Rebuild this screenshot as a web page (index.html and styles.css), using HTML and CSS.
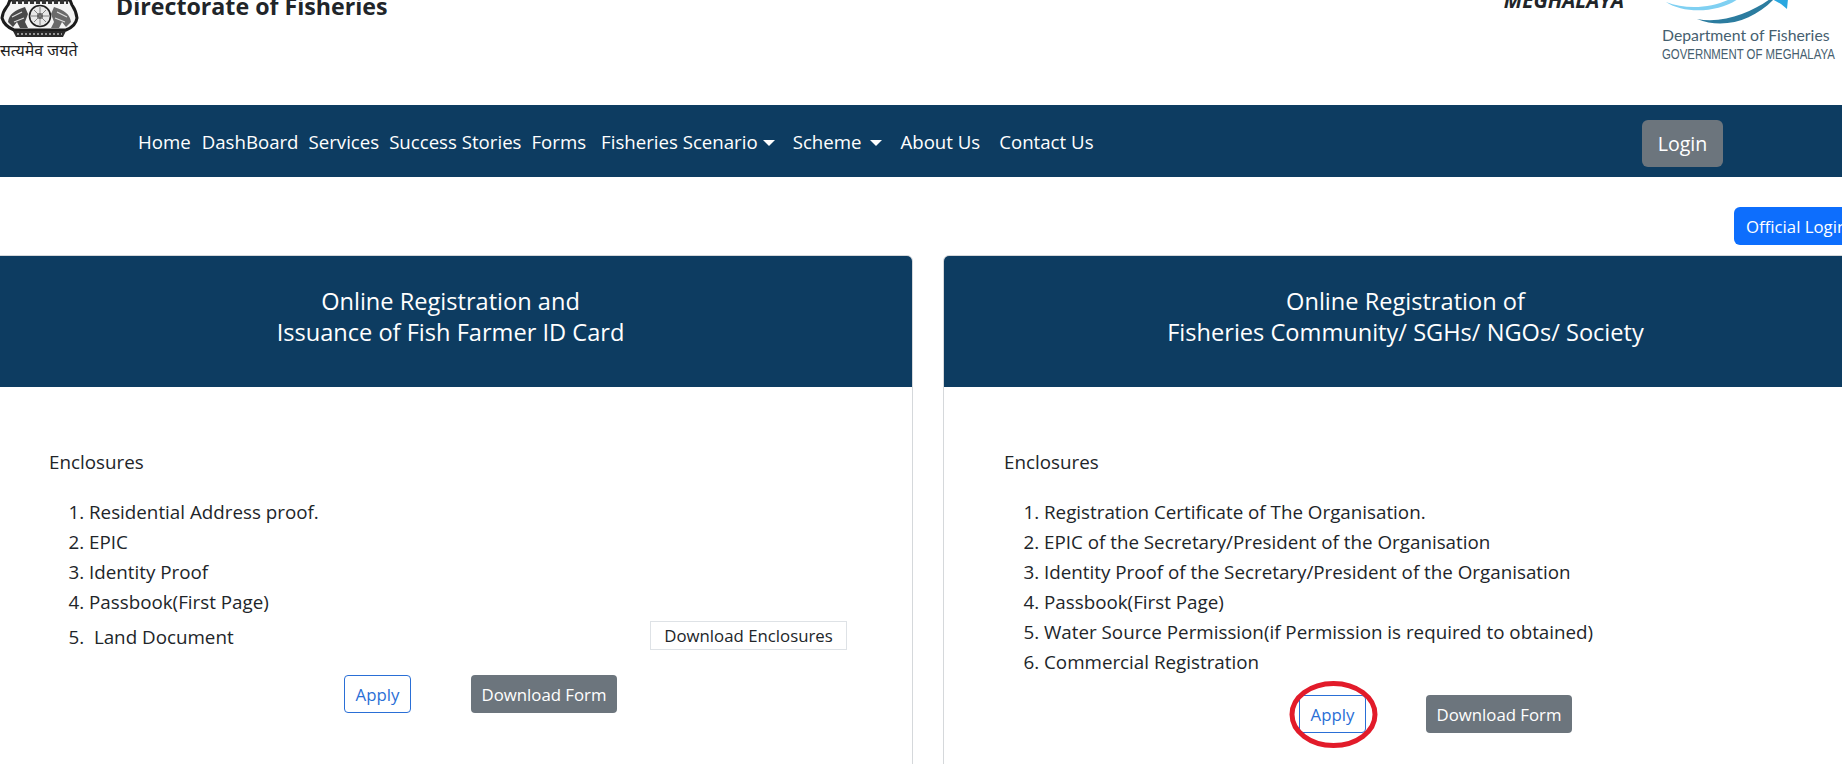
FILE: index.html
```html
<!DOCTYPE html>
<html lang="en">
<head>
<meta charset="utf-8">
<title>Directorate of Fisheries</title>
<link rel="stylesheet" href="styles.css">
</head>
<body>
<header class="top">
  <div class="emblem">
    <svg class="emblem-art" width="80" height="38" viewBox="0 0 80 38" aria-hidden="true">
      <path d="M2 18 C3 10 6 8 8 5 L10 0 L70 0 L72 5 C74 8 76 10 77 18 C76 25 71 28 66 30 L14 30 C9 28 4 25 2 18Z" fill="#f4f4f4" stroke="#1c1c1c" stroke-width="3"/>
      <path d="M13 31 L66 31 L63 37 L16 37Z" fill="#2a2a2a"/>
      <path d="M17 34H62" stroke="#bbb" stroke-width="1.5" stroke-dasharray="2 2"/>
      <circle cx="40" cy="16" r="10.5" fill="#e8e8e8" stroke="#1f1f1f" stroke-width="1.6"/>
      <circle cx="40" cy="16" r="3" fill="#555"/>
      <path d="M40 7V25M31 16H49M34 10L46 22M46 10L34 22" stroke="#777" stroke-width=".9"/>
      <path d="M8 22 C9 14 15 10 25 7 L28 14 L25 22 L28 28 L20 28 L17 22 L13 27Z" fill="#4a4a4a"/>
      <path d="M12 17 L22 12 M14 22 L24 18" stroke="#ddd" stroke-width="1.2"/>
      <path d="M71 22 C70 14 64 10 54 7 L51 14 L54 22 L51 28 L59 28 L62 22 L66 27Z" fill="#6a6a6a"/>
      <path d="M67 17 L57 12 M65 22 L55 18" stroke="#ddd" stroke-width="1.2"/>
      <path d="M12 2H68" stroke="#333" stroke-width="4" stroke-dasharray="4 2"/>
    </svg>
    <span class="motto">सत्यमेव जयते</span>
  </div>
  <h1 class="title">Directorate of Fisheries</h1>
  <div class="top-right">
    <span class="state">MEGHALAYA</span>
    <div class="dept">
      <svg class="dept-art" width="175" height="27" viewBox="0 0 175 27" aria-hidden="true">
        <path d="M4 2 C24 10 50 8 68 -1 L76 -1 C56 13 22 14 4 2Z" fill="#7fd0f2"/>
        <path d="M35 19 C62 24 90 12 108 -1 L112 -1 C92 20 62 30 35 19Z" fill="#2c7c9f"/>
        <path d="M110 -1 L126 -1 L125 9 L119 4Z" fill="#2aa7e0"/>
      </svg>
      <span class="dept-name">Department of Fisheries</span>
      <span class="dept-gov">GOVERNMENT OF MEGHALAYA</span>
    </div>
  </div>
</header>

<nav class="nav">
  <a class="nav-link home" href="#">Home</a>
  <a class="nav-link dash" href="#">DashBoard</a>
  <a class="nav-link serv" href="#">Services</a>
  <a class="nav-link succ" href="#">Success Stories</a>
  <a class="nav-link form" href="#">Forms</a>
  <a class="nav-link fish" href="#">Fisheries Scenario<span class="caret"></span></a>
  <a class="nav-link sche" href="#">Scheme<span class="caret wide"></span></a>
  <a class="nav-link abou" href="#">About Us</a>
  <a class="nav-link cont" href="#">Contact Us</a>
  <a class="login" href="#">Login</a>
</nav>

<div class="official-row"><a class="official" href="#">Official Login</a></div>

<main class="cards">
  <section class="card">
    <div class="card-head">Online Registration and<br>Issuance of Fish Farmer ID Card</div>
    <div class="card-body">
      <p class="encl">Enclosures</p>
      <ol class="docs">
        <li>Residential Address proof.</li>
        <li>EPIC</li>
        <li>Identity Proof</li>
        <li>Passbook(First Page)</li>
        <li class="docs-last"><span>&nbsp;Land Document</span><a class="dl-encl" href="#">Download Enclosures</a></li>
      </ol>
      <div class="actions">
        <a class="btn apply" href="#">Apply</a>
        <a class="btn grey" href="#">Download Form</a>
      </div>
    </div>
  </section>
  <section class="card">
    <div class="card-head">Online Registration of<br>Fisheries Community/ SGHs/ NGOs/ Society</div>
    <div class="card-body">
      <p class="encl">Enclosures</p>
      <ol class="docs">
        <li>Registration Certificate of The Organisation.</li>
        <li>EPIC of the Secretary/President of the Organisation</li>
        <li>Identity Proof of the Secretary/President of the Organisation</li>
        <li>Passbook(First Page)</li>
        <li>Water Source Permission(if Permission is required to obtained)</li>
        <li>Commercial Registration</li>
      </ol>
      <div class="actions">
        <a class="btn apply marked" href="#">Apply
          <svg class="ring" width="90" height="70" viewBox="0 0 90 70" aria-hidden="true"><ellipse cx="45.5" cy="34.5" rx="41.5" ry="31" fill="none" stroke="#e21b2a" stroke-width="5"/></svg>
        </a>
        <a class="btn grey" href="#">Download Form</a>
      </div>
    </div>
  </section>
</main>
</body>
</html>
```

FILE: styles.css
```css
* { box-sizing: border-box; }
html, body { height: 764px; overflow: hidden; }
body {
  margin: 0;
  background: #fff;
  color: #212529;
  font-family: "Open Sans", "Noto Sans", "Liberation Sans", sans-serif;
  font-size: 18.8px;
}
a { text-decoration: none; }

.top { height: 105px; display: flex; align-items: flex-start; overflow: hidden; }
.emblem { width: 116px; flex: none; }
.emblem-art { display: block; }
.motto { display: block; font-family: "Noto Sans", "DejaVu Sans", sans-serif; font-size: 16px; line-height: 22px; margin-top: 1px; white-space: nowrap; color: #222; }
.title { margin: -8px 0 0; font-size: 23.2px; line-height: 28px; font-weight: 700; color: #212529; white-space: nowrap; }
.top-right { margin-left: auto; display: flex; align-items: flex-start; }
.state { margin: -10px 38px 0 0; font-size: 20.8px; line-height: 20px; font-weight: 700; font-style: italic; color: #212529; }
.dept { width: 180px; display: flex; flex-direction: column; color: #46606f; }
.dept-art { display: block; }
.dept-name { font-family: "Lato", sans-serif; font-size: 15.8px; line-height: 18px; margin-top: -1px; white-space: nowrap; }
.dept-gov { font-family: "Liberation Sans", sans-serif; font-size: 15.5px; line-height: 20px; white-space: nowrap; transform: scaleX(.735); transform-origin: left center; }

.nav { height: 72px; background: #0d3c61; display: flex; align-items: center; padding: 0 119px 0 138px; }
.nav-link { color: #fff; white-space: nowrap; font-size: 18.65px; padding-top: 1px; }
.home { margin-right: 11px; }
.dash { margin-right: 10px; }
.serv { margin-right: 10px; }
.succ { margin-right: 10px; }
.form { margin-right: 15px; }
.fish { margin-right: 18px; }
.sche { margin-right: 18px; }
.abou { margin-right: 19px; }
.caret { display: inline-block; margin-left: 5px; vertical-align: 3px; border-top: 6px solid #fff; border-left: 6px solid transparent; border-right: 6px solid transparent; }
.caret.wide { margin-left: 9px; }
.login { margin-left: auto; width: 81px; height: 47px; display: flex; align-items: center; justify-content: center; background: #6c757d; color: #fff; border-radius: 6px; font-size: 19.6px; margin-top: 4px; }

.official-row { height: 78px; padding-top: 30px; display: flex; justify-content: flex-end; overflow: hidden; }
.official { flex: none; width: 108px; height: 38px; padding-left: 12px; display: flex; align-items: center; white-space: nowrap; overflow: hidden; background: #0d6efd; color: #fff; border-radius: 6px 0 0 6px; font-size: 16.8px; }

.cards { display: grid; grid-template-columns: 925px 925px; column-gap: 30px; margin-left: -12px; }
.card { height: 600px; border: 1px solid #d5d8db; border-radius: 6px; overflow: hidden; }
.card-head { height: 131px; background: #0d3c61; color: #fff; font-size: 23.6px; line-height: 31px; text-align: center; padding-top: 30px; }
.card-body { padding: 62px 60px 0; position: relative; }
.encl { margin: 0 0 21px; line-height: 27px; }
.docs { margin: 0; padding-left: 40px; line-height: 30px; }
.docs-last { line-height: 30px; height: 40px; position: relative; }
.docs-last span { display: inline-block; margin-top: 5px; }
.dl-encl { position: absolute; right: 5px; top: 4px; width: 197px; height: 29px; line-height: 27px; text-align: center; border: 1px solid #dee2e6; color: #212529; font-size: 16.8px; }
.actions { display: flex; gap: 60px; padding-left: 295px; margin-top: 18px; }
.btn { height: 38px; display: flex; align-items: center; justify-content: center; border-radius: 4px; font-size: 16.8px; white-space: nowrap; position: relative; }
.apply { width: 67px; border: 1px solid #2a6fd6; color: #2a6fd6; }
.grey { width: 146px; background: #6c757d; color: #fff; }
.ring { position: absolute; left: -12px; top: -16px; pointer-events: none; }
```
